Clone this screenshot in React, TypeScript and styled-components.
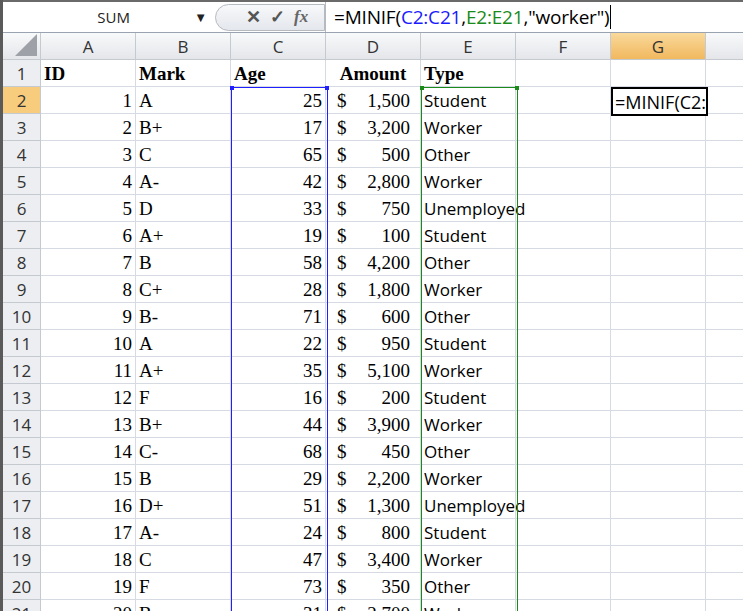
import React from "react";
import styled, { createGlobalStyle } from "styled-components";

const G = createGlobalStyle`
  body { margin:0; background:#fff; overflow:hidden; }
`;
const Page = styled.div`
  width:743px; height:611px; overflow:hidden; position:relative;
  border-left:3px solid #5a5a5a; box-sizing:border-box;
`;
const Bar = styled.div`
  display:flex; height:33px; border-top:2px solid #6a6a6a; border-bottom:1px solid #9aa3b0;
  background:#fff; box-sizing:border-box; align-items:center;
`;
const NameBox = styled.div`
  width:212px; display:flex; align-items:center; justify-content:space-between; padding:0 8px 0 0;
  font:15px "Open Sans", "Liberation Sans", sans-serif; color:#222; box-sizing:border-box;
  span:first-child{ flex:1; text-align:center; padding-left:30px; }
`;
const Btns = styled.div`
  width:110px; height:27px; border:1px solid #b5b9c0; border-radius:14px 0 0 14px;
  background:linear-gradient(#f7f8fa,#e4e7ec); display:flex; align-items:center; gap:9px;
  padding-left:30px; box-sizing:border-box; color:#555; font:bold 18px "Liberation Sans", sans-serif;
`;
const Fx = styled.span`font:italic bold 17px "Liberation Serif", serif; color:#666;`;
const Formula = styled.div`
  flex:1; height:100%; border-left:1px solid #b5b9c0; padding-left:8px; display:flex; align-items:center;
  font:19px "Open Sans", "Liberation Sans", sans-serif; color:#000; white-space:nowrap; letter-spacing:-0.2px;
`;
const Caret = styled.span`display:inline-block; width:1px; height:24px; background:#000; margin-left:1px;`;
const Grid = styled.div`
  display:grid; grid-template-columns:38px repeat(8,95px); grid-auto-rows:27px; position:relative;
`;
const Head = styled.div<{ $sel?: boolean }>`
  background:${p => p.$sel ? "linear-gradient(#f9d99b,#f1b85e)" : "linear-gradient(#f8f9fa,#e4e6ea)"};
  border-right:1px solid #c5c9d0; border-bottom:1px solid #c5c9d0;
  display:flex; align-items:center; justify-content:center; position:relative;
  font:17px "Open Sans", "Liberation Sans", sans-serif; color:#333; box-sizing:border-box;
`;
const RowHead = styled(Head)`
  background:${p => p.$sel ? "#f7cc7c" : "#eceef1"};
`;
const Tri = styled.div`
  position:absolute; right:3px; bottom:3px; width:0; height:0;
  border-left:22px solid transparent; border-bottom:22px solid #9ea2a8;
`;
const Cell = styled.div<{ $align?: string; $font?: string; $bold?: boolean }>`
  border-right:1px solid #d6dae3; border-bottom:1px solid #d6dae3; box-sizing:border-box;
  display:flex; align-items:flex-end; justify-content:${p => p.$align || "flex-start"};
  padding:0 3px 1px 3px; white-space:nowrap; overflow:hidden; color:#000;
  font:${p => (p.$bold ? "bold " : "") + (p.$font === "sans" ? "17px \"Open Sans\", \"Liberation Sans\", sans-serif" : "19px \"Liberation Serif\", serif")};
`;
const Money = styled(Cell)`justify-content:space-between; padding:0 10px 1px 11px;`;
const Range = styled.div<{ $c: string }>`
  position:absolute; border:1px solid ${p => p.$c}; pointer-events:none;
  &::before,&::after{content:"";position:absolute;width:4px;height:4px;background:${p => p.$c};top:-2px;}
  &::before{left:-2px;} &::after{right:-2px;}
`;
const Active = styled.div`
  position:absolute; left:608px; top:54px; width:97px; height:29px; border:2px solid #000; box-sizing:border-box;
  background:#fff; font:18px "Open Sans","Liberation Sans",sans-serif; display:flex; align-items:center;
  padding-left:2px; overflow:hidden; white-space:nowrap;
`;

const data: any[] = [
  ["A",25,1500,"Student"],["B+",17,3200,"Worker"],["C",65,500,"Other"],["A-",42,2800,"Worker"],
  ["D",33,750,"Unemployed"],["A+",19,100,"Student"],["B",58,4200,"Other"],["C+",28,1800,"Worker"],
  ["B-",71,600,"Other"],["A",22,950,"Student"],["A+",35,5100,"Worker"],["F",16,200,"Student"],
  ["B+",44,3900,"Worker"],["C-",68,450,"Other"],["B",29,2200,"Worker"],["D+",51,1300,"Unemployed"],
  ["A-",24,800,"Student"],["C",47,3400,"Worker"],["F",73,350,"Other"],["B",31,2700,"Worker"],
];

export default function App() {
  const cols = ["A","B","C","D","E","F","G","H"];
  return (
    <Page>
      <G />
      <Bar>
        <NameBox><span>SUM</span><span style={{fontSize:13}}>▼</span></NameBox>
        <Btns><span>✕</span><span>✓</span><Fx>fx</Fx></Btns>
        <Formula>=MINIF(<span style={{color:"#1a1aff"}}>C2:C21</span>,<span style={{color:"#1a8a1a"}}>E2:E21</span>,"worker")<Caret/></Formula>
      </Bar>
      <Grid>
        <Head><Tri/></Head>
        {cols.map(c => <Head key={c} $sel={c==="G"}>{c}</Head>)}
        <RowHead>1</RowHead>
        {["ID","Mark","Age","Amount","Type","","",""].map((t,i)=><Cell key={i} $bold $align={i===3?"center":undefined}>{t}</Cell>)}
        {data.map((d,i)=>(
          <React.Fragment key={i}>
            <RowHead $sel={i===0}>{i+2}</RowHead>
            <Cell $align="flex-end">{i+1}</Cell>
            <Cell>{d[0]}</Cell>
            <Cell $align="flex-end">{d[1]}</Cell>
            <Money><span>$</span><span>{d[2].toLocaleString("en-US")}</span></Money>
            <Cell $font="sans" style={{overflow:"visible"}}>{d[3]}</Cell>
            <Cell/><Cell/><Cell/>
          </React.Fragment>
        ))}
        <Range $c="#2020ff" style={{left:228,top:54,width:95,height:600}}/>
        <Range $c="#1a8a1a" style={{left:418,top:54,width:95,height:600}}/>
        <Active>=MINIF(C2:</Active>
      </Grid>
    </Page>
  );
}
